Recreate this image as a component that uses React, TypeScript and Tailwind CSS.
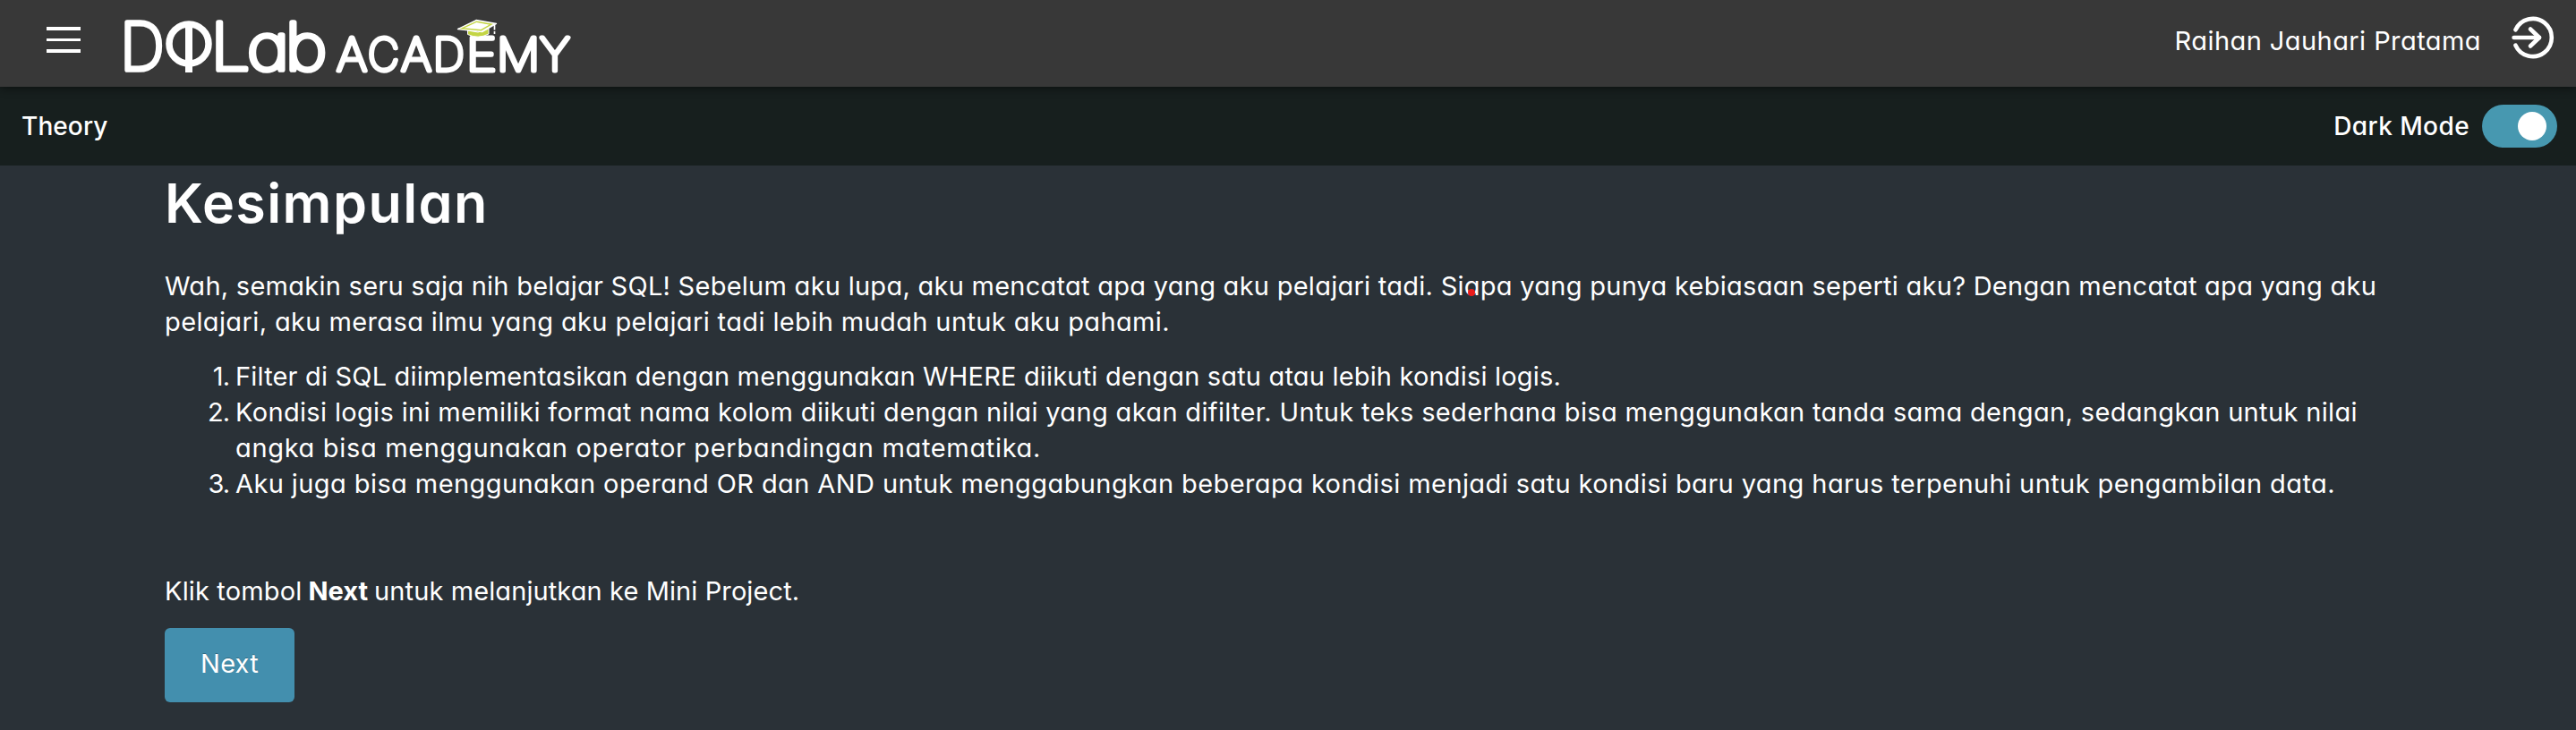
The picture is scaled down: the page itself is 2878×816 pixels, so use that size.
import React from "react";

type GlyphSpec = { ch: string; from: number; to: number; bearing: number; ink: number };

const labLetters: GlyphSpec[] = [
  { ch: "D", from: 138, to: 183, bearing: 0.135, ink: 0.8 },
  { ch: "L", from: 240, to: 279, bearing: 0.165, ink: 0.76 },
  { ch: "a", from: 278, to: 320, bearing: 0.1, ink: 0.77 },
  { ch: "b", from: 322, to: 364, bearing: 0.13, ink: 0.78 },
];

const academyLetters: GlyphSpec[] = [
  { ch: "A", from: 375, to: 411, bearing: 0.04, ink: 0.92 },
  { ch: "C", from: 411, to: 446, bearing: 0.07, ink: 0.86 },
  { ch: "A", from: 447, to: 483, bearing: 0.04, ink: 0.92 },
  { ch: "D", from: 486, to: 519, bearing: 0.135, ink: 0.8 },
  { ch: "E", from: 524, to: 554, bearing: 0.16, ink: 0.74 },
  { ch: "M", from: 558, to: 600, bearing: 0.115, ink: 0.77 },
  { ch: "Y", from: 602, to: 638, bearing: 0.035, ink: 0.93 },
];

function Letters({ items, y, stroke }: { items: GlyphSpec[]; y: number; stroke: number }) {
  return (
    <>
      {items.map((g, i) => {
        const advance = (g.to - g.from - stroke) / g.ink;
        return (
          <text key={i} x={g.from + stroke / 2 - g.bearing * advance} y={y} textLength={advance} lengthAdjust="spacingAndGlyphs">
            {g.ch}
          </text>
        );
      })}
    </>
  );
}

function Logo() {
  return (
    <svg width="510" height="70" viewBox="134 16 510 70" className="ml-[44px] block shrink-0" aria-label="DQLab Academy">
      <g fill="#fff" stroke="#fff" strokeWidth="5.7" strokeLinejoin="round" fontSize="72" fontWeight="100">
        <Letters items={labLetters} y={78} stroke={5.7} />
      </g>
      <circle cx="211" cy="49" r="22" fill="none" stroke="#fff" strokeWidth="7.5" />
      <rect x="207" y="26" width="8" height="55" fill="#fff" />
      <g fill="#fff" stroke="#fff" strokeWidth="5" strokeLinejoin="round" fontSize="50.5" fontWeight="100">
        <Letters items={academyLetters} y={78.8} stroke={5} />
      </g>
      <path d="M522.500 34 V38.500 Q534 44 546 38 V32 L534 36 Z" fill="#c3d544" stroke="#fff" strokeWidth="1" />
      <path d="M511.500 32.500 L532 22.500 L554.500 26.500 L539 35.500 Z" fill="#fff" stroke="#fff" strokeWidth="1.300" strokeLinejoin="round" />
      <path d="M516 31.800 L532.500 24.200 L549 27.200 L537.500 33.700 Z" fill="#fff" stroke="#c3d544" strokeWidth="1.400" />
      <path d="M552.500 28 V33.500 M552.500 35 V38" stroke="#fff" strokeWidth="1.700" />
    </svg>
  );
}

function LogoutIcon() {
  return (
    <svg width="48" height="48" viewBox="0 0 48 48" fill="none" stroke="#fff" strokeWidth="4.600" strokeLinecap="round" strokeLinejoin="round">
      <path d="M4.500 15.300 A21.100 21.100 0 1 1 4.500 32.700" />
      <path d="M2.600 24 H31" />
      <path d="M21 14.500 L31 24 L21 33.500" />
    </svg>
  );
}

function Item({ n, children }: { n: number; children: React.ReactNode }) {
  return (
    <li className="flex">
      <span className="mr-[7px] w-[72px] shrink-0 text-right tracking-[-1px]">{n}.</span>
      <div>{children}</div>
    </li>
  );
}

export default function App() {
  return (
    <div className="flex min-h-[816px] w-full flex-col bg-[#2a3137] font-['Inter',sans-serif] text-[29px] leading-[40px] text-white [font-feature-settings:'cv11']">
      <header className="relative z-10 flex h-[97px] items-start bg-[#383838] shadow-[0_2px_10px_rgba(0,0,0,0.45)]">
        <button className="mt-[30px] ml-[52px] flex w-[38px] shrink-0 flex-col gap-[9px]" aria-label="Menu">
          <span className="h-[3.5px] w-full bg-white" />
          <span className="h-[3.5px] w-full bg-white" />
          <span className="h-[3.5px] w-full bg-white" />
        </button>
        <div className="mt-4">
          <Logo />
        </div>
        <div className="ml-auto flex items-start pr-[24px]">
          <span className="mt-[26px] mr-[34px] whitespace-nowrap tracking-[0.43px]">Raihan Jauhari Pratama</span>
          <div className="mt-[18px]">
            <LogoutIcon />
          </div>
        </div>
      </header>

      <div className="flex h-[88px] items-center justify-between bg-[#171f1e] pr-[21px] pl-[24px] text-[28px] font-medium">
        <span className="tracking-[0.1px]">Theory</span>
        <div className="flex items-center gap-[14px]">
          <span className="tracking-[0.4px]">Dark Mode</span>
          <span className="flex h-12 w-[84px] items-center justify-end rounded-full bg-[#4798b0] pr-3">
            <span className="h-8 w-8 rounded-full bg-white" />
          </span>
        </div>
      </div>

      <main className="flex flex-col items-start pl-[184px]">
        <h1 className="mt-[6px] text-[61px] leading-[72px] font-semibold tracking-[1.4px]">Kesimpulan</h1>

        <div className="relative mt-[37px] whitespace-nowrap">
          <p>
            <span className="block tracking-[0.265px]">
              Wah, semakin seru saja nih belajar SQL! Sebelum aku lupa, aku mencatat apa yang aku pelajari tadi. Siapa yang punya kebiasaan seperti aku? Dengan mencatat apa yang aku
            </span>
            <span className="block tracking-[0.38px]">
              pelajari, aku merasa ilmu yang aku pelajari tadi lebih mudah untuk aku pahami.
            </span>
          </p>
          <span className="absolute top-[23px] left-[1456px] h-2 w-2 rounded-full bg-[#ea1c1c]" />
        </div>

        <ol className="mt-[21px] whitespace-nowrap">
          <Item n={1}>
            <span className="tracking-[0.178px]">
              Filter di SQL diimplementasikan dengan menggunakan WHERE diikuti dengan satu atau lebih kondisi logis.
            </span>
          </Item>
          <Item n={2}>
            <span className="block tracking-[0.344px]">
              Kondisi logis ini memiliki format nama kolom diikuti dengan nilai yang akan difilter. Untuk teks sederhana bisa menggunakan tanda sama dengan, sedangkan untuk nilai
            </span>
            <span className="block tracking-[0.663px]">angka bisa menggunakan operator perbandingan matematika.</span>
          </Item>
          <Item n={3}>
            <span className="tracking-[0.41px]">
              Aku juga bisa menggunakan operand OR dan AND untuk menggabungkan beberapa kondisi menjadi satu kondisi baru yang harus terpenuhi untuk pengambilan data.
            </span>
          </Item>
        </ol>

        <p className="mt-[80px] flex gap-[7px] whitespace-nowrap">
          <span className="tracking-[0.15px]">Klik tombol</span>
          <b className="font-bold">Next</b>
          <span className="tracking-[0.1px]">untuk melanjutkan ke Mini Project.</span>
        </p>

        <button className="mt-[21px] flex h-[83px] w-[145px] items-center justify-center rounded-md bg-[#438fae] pb-[3px] text-[29px] tracking-[0.2px] [text-shadow:0_-1px_0_rgba(0,0,0,0.25)]">
          Next
        </button>
      </main>
    </div>
  );
}
